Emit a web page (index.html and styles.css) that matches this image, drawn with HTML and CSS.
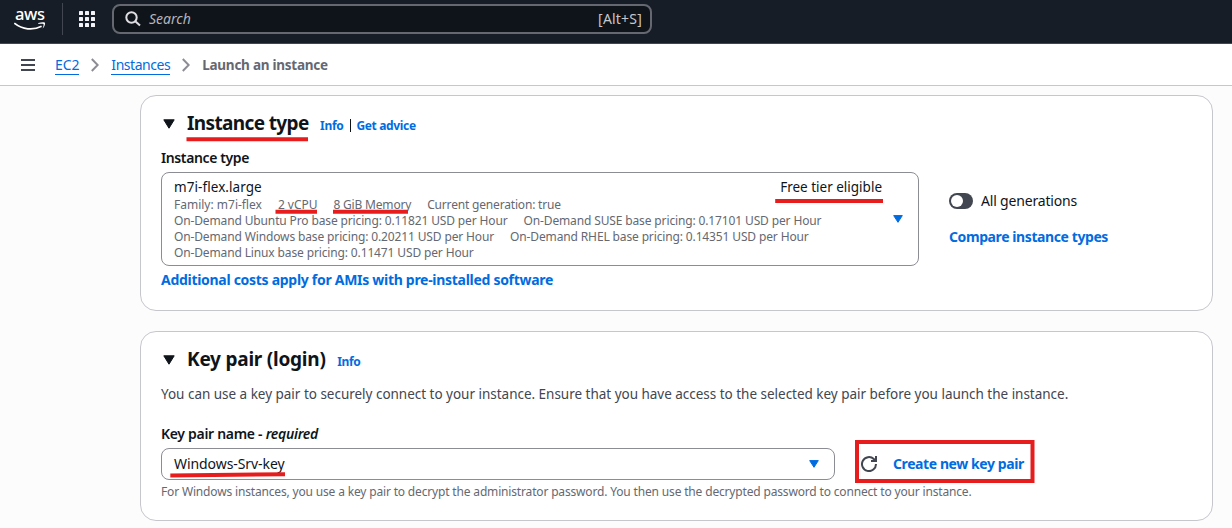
FILE: index.html
```html
<!DOCTYPE html>
<html lang="en">
<head>
<meta charset="utf-8">
<title>Launch an instance | EC2</title>
<link rel="stylesheet" href="styles.css">
</head>
<body>
<header class="topbar">
  <div class="logo">
    <span class="logo-text">aws</span>
    <svg class="logo-smile" width="32" height="9" viewBox="0 0 32 9"><path d="M.3 1.2C8.500 7.700 19 8.600 27.600 4.300" fill="none" stroke="#fff" stroke-width="1.700"/><path d="M24.300 1.100C27 .1 30.500-.1 31 .8C31.400 2.200 30.200 5.300 28.600 6.600C29.300 4.500 30 2.700 29.400 2.100C28.600 1.400 26.200 1.700 24.300 1.900Z" fill="#fff"/></svg>
  </div>
  <div class="topbar-line"></div>
  <svg class="apps" width="16" height="16" viewBox="0 0 16 16" fill="#f3f3f7"><rect width="4" height="4" rx=".6"/><rect x="6" width="4" height="4" rx=".6"/><rect x="12" width="4" height="4" rx=".6"/><rect y="6" width="4" height="4" rx=".6"/><rect x="6" y="6" width="4" height="4" rx=".6"/><rect x="12" y="6" width="4" height="4" rx=".6"/><rect y="12" width="4" height="4" rx=".6"/><rect x="6" y="12" width="4" height="4" rx=".6"/><rect x="12" y="12" width="4" height="4" rx=".6"/></svg>
  <div class="search">
    <svg width="16" height="16" viewBox="0 0 16 16" fill="none" stroke="#dedee3" stroke-width="2"><circle cx="6.500" cy="6.500" r="5.200"/><path d="M10.300 10.300L15 14.600"/></svg>
    <span class="search-hint">Search</span>
    <span class="search-key">[Alt+S]</span>
  </div>
</header>
<nav class="crumbs">
  <svg class="burger" width="14" height="12" viewBox="0 0 14 12" fill="#424650"><path d="M0 0h14v2H0zM0 5h14v2H0zM0 10h14v2H0z"/></svg>
  <a class="crumb crumb-ec2">EC2</a>
  <svg class="chevron" width="8" height="14" viewBox="0 0 8 14" fill="none" stroke="#8c8c94" stroke-width="2"><path d="M.8 1L6.700 7L.8 13"/></svg>
  <a class="crumb crumb-instances">Instances</a>
  <svg class="chevron" width="8" height="14" viewBox="0 0 8 14" fill="none" stroke="#8c8c94" stroke-width="2"><path d="M.8 1L6.700 7L.8 13"/></svg>
  <span class="crumb-current">Launch an instance</span>
</nav>
<main class="content">
  <section class="card card-type">
    <div class="card-head">
      <svg class="expander" width="12" height="10" viewBox="0 0 12 10"><path d="M.8.800h10.400L6 9.200z" fill="#0f141a" stroke="#0f141a" stroke-linejoin="round"/></svg>
      <h2 class="title title-type">Instance type</h2>
      <a class="small-link info">Info</a>
      <span class="pipe"></span>
      <a class="small-link advice">Get advice</a>
    </div>
    <div class="type-row">
      <div class="type-main">
        <div class="label label-type">Instance type</div>
        <div class="select select-type">
          <div class="option">
            <div class="option-top"><span class="option-name">m7i-flex.large</span><span class="free">Free tier eligible</span></div>
            <div class="tags"><span class="family">Family: m7i-flex</span><span class="vcpu">2 vCPU</span><span class="memory">8 GiB Memory</span><span class="generation">Current generation: true</span></div>
            <div class="tags"><span class="price">On-Demand Ubuntu Pro base pricing: 0.11821 USD per Hour</span><span class="price">On-Demand SUSE base pricing: 0.17101 USD per Hour</span></div>
            <div class="tags"><span class="price">On-Demand Windows base pricing: 0.20211 USD per Hour</span><span class="price">On-Demand RHEL base pricing: 0.14351 USD per Hour</span></div>
            <div class="tags"><span class="price">On-Demand Linux base pricing: 0.11471 USD per Hour</span></div>
          </div>
          <svg class="caret" width="10" height="8" viewBox="0 0 10 8"><path d="M.7.600h8.600L5 7.300z" fill="#006ce0" stroke="#006ce0" stroke-linejoin="round"/></svg>
        </div>
        <a class="link costs">Additional costs apply for AMIs with pre-installed software</a>
      </div>
      <div class="type-side">
        <div class="toggle-row"><span class="toggle"><span class="knob"></span></span><span class="toggle-text">All generations</span></div>
        <a class="link compare">Compare instance types</a>
      </div>
    </div>
  </section>
  <section class="card card-key">
    <div class="card-head">
      <svg class="expander" width="12" height="10" viewBox="0 0 12 10"><path d="M.8.800h10.400L6 9.200z" fill="#0f141a" stroke="#0f141a" stroke-linejoin="round"/></svg>
      <h2 class="title title-key">Key pair (login)</h2>
      <a class="small-link info">Info</a>
    </div>
    <p class="description">You can use a key pair to securely connect to your instance. Ensure that you have access to the selected key pair before you launch the instance.</p>
    <div class="label label-key"><span class="key-name">Key pair name -</span> <i class="required">required</i></div>
    <div class="key-row">
      <div class="select select-key"><span class="key-value">Windows-Srv-key</span><svg class="caret" width="10" height="8" viewBox="0 0 10 8"><path d="M.7.600h8.600L5 7.300z" fill="#006ce0" stroke="#006ce0" stroke-linejoin="round"/></svg></div>
      <svg class="refresh" width="16" height="16" viewBox="0 0 16 16" fill="none" stroke="#424650" stroke-width="2"><path d="M15 8A7 7 0 1 1 12.800 3L14.900 5M15 0V5H10"/></svg>
      <a class="link create">Create new key pair</a>
    </div>
    <p class="constraint">For Windows instances, you use a key pair to decrypt the administrator password. You then use the decrypted password to connect to your instance.</p>
  </section>
</main>
<svg class="annotations" width="1232" height="528" viewBox="0 0 1232 528" fill="none" stroke="#e71d1d" stroke-width="4">
  <path d="M186.500 139.300H308M275.500 211.800H317M333 211.800H408M775.200 201H883"/>
  <path d="M170.300 475.500L285 474.200"/>
  <rect x="857" y="442" width="175.500" height="39"/>
</svg>
</body>
</html>
```
FILE: styles.css
```css
* { box-sizing: border-box; }
body { margin: 0; width: 1232px; height: 528px; overflow: hidden; position: relative; background: #fcfcfc; color: #0f141a; font-family: "Noto Sans", "Open Sans", sans-serif; font-size: 14px; line-height: 20px; white-space: nowrap; }
h2, p { margin: 0; }
svg { display: block; flex: none; }
.topbar { display: flex; height: 44px; background: #161d26; border-bottom: 1px solid #424650; }
.logo { width: 48px; padding: 4px 0 0 14px; }
.logo-text { display: block; height: 18px; line-height: 20px; padding-left: 1px; color: #fff; font-size: 16.5px; font-weight: 500; letter-spacing: -.4px; }
.topbar-line { width: 1px; height: 32px; margin: 3px 16px 0 14px; background: #424650; }
.apps { margin-top: 11px; }
.search { display: flex; align-items: center; width: 540px; height: 30px; margin: 4px 0 0 17px; padding: 0 8px 0 11px; border: 2px solid #656871; border-radius: 8px; background: #0f141a; }
.search-hint { margin-left: 8px; color: #b4b4bb; font-style: italic; }
.search-key { margin-left: auto; color: #c6c6cd; font-size: 14px; letter-spacing: .2px; }
.crumbs { display: flex; align-items: center; height: 42px; padding-left: 21px; background: #fff; border-bottom: 1px solid #c6c6cd; }
.burger { margin-right: 20px; }
.crumb { color: #006ce0; border-bottom: 1px solid #006ce0; line-height: 19px; }
.crumb-ec2 { letter-spacing: -.1px; }
.crumb-instances { letter-spacing: -.46px; }
.chevron { margin: 0 12px; }
.crumb-current { color: #656871; font-weight: 700; font-size: 13.5px; letter-spacing: -.25px; }
.content { display: flex; flex-direction: column; gap: 20px; padding: 9px 19px 0 140px; }
.card { border: 1px solid #c6c6cd; border-radius: 16px; background: #fff; padding: 0 20px; }
.card-type { height: 216px; }
.card-key { height: 190px; }
.card-head { display: flex; align-items: center; height: 55px; padding-left: 2px; }
.expander { margin-right: 12px; }
.title { margin-top: -2px; font-size: 19px; line-height: 24px; font-weight: 700; }
.title-type { letter-spacing: -.63px; }
.title-key { letter-spacing: -.23px; }
.small-link { margin: 4px 0 0 11.5px; color: #006ce0; font-size: 12px; line-height: 16px; font-weight: 700; letter-spacing: -.34px; }
.pipe { width: 1px; height: 13px; margin: 3px 5px 0 7px; background: #0f141a; }
.small-link.advice { margin-left: 0; }
.type-row { display: flex; gap: 30px; }
.type-main { width: 758px; }
.label { font-weight: 600; font-size: 14px; letter-spacing: -.3px; }
.label-type { margin-top: -3px; letter-spacing: -.38px; }
.select { display: flex; align-items: center; border: 1px solid #8c8c94; border-radius: 8px; background: #fff; padding: 0 15px 0 12px; }
.select-type { height: 94px; margin-top: 4px; }
.option { width: 708px; align-self: flex-start; margin-top: 4px; }
.option-top { display: flex; justify-content: space-between; height: 20px; }
.option-name, .free { font-size: 13.5px; }
.option-name { letter-spacing: .07px; }
.caret { margin-left: auto; }
.tags { display: flex; gap: 16px; height: 16px; color: #656871; font-size: 12px; line-height: 16px; }
.vcpu { letter-spacing: -.05px; }
.memory, .generation { letter-spacing: -.18px; }
.price { letter-spacing: -.135px; }
.link { display: block; color: #006ce0; font-weight: 700; font-size: 14px; letter-spacing: -.41px; }
.costs { margin-top: 4px; letter-spacing: -.29px; }
.type-side { padding-top: 40px; }
.toggle-row { display: flex; align-items: center; gap: 8px; }
.toggle { width: 24px; height: 16px; padding: 2px; border-radius: 8px; background: #424650; }
.knob { display: block; width: 12px; height: 12px; border-radius: 6px; background: #fff; }
.toggle-text { letter-spacing: -.18px; }
.compare { margin-top: 16px; }
.description { margin-top: -3px; color: #424650; font-size: 13.5px; letter-spacing: -.018px; }
.label-key { margin-top: 20px; }
.key-row { display: flex; align-items: center; margin-top: 4px; }
.select-key { width: 674px; height: 32px; }
.key-value { letter-spacing: -.07px; }
.refresh { margin: 0 16px 0 26px; }
.constraint { margin-top: 4px; color: #656871; font-size: 12px; line-height: 16px; letter-spacing: -.165px; }
.annotations { position: absolute; left: 0; top: 0; }
```
